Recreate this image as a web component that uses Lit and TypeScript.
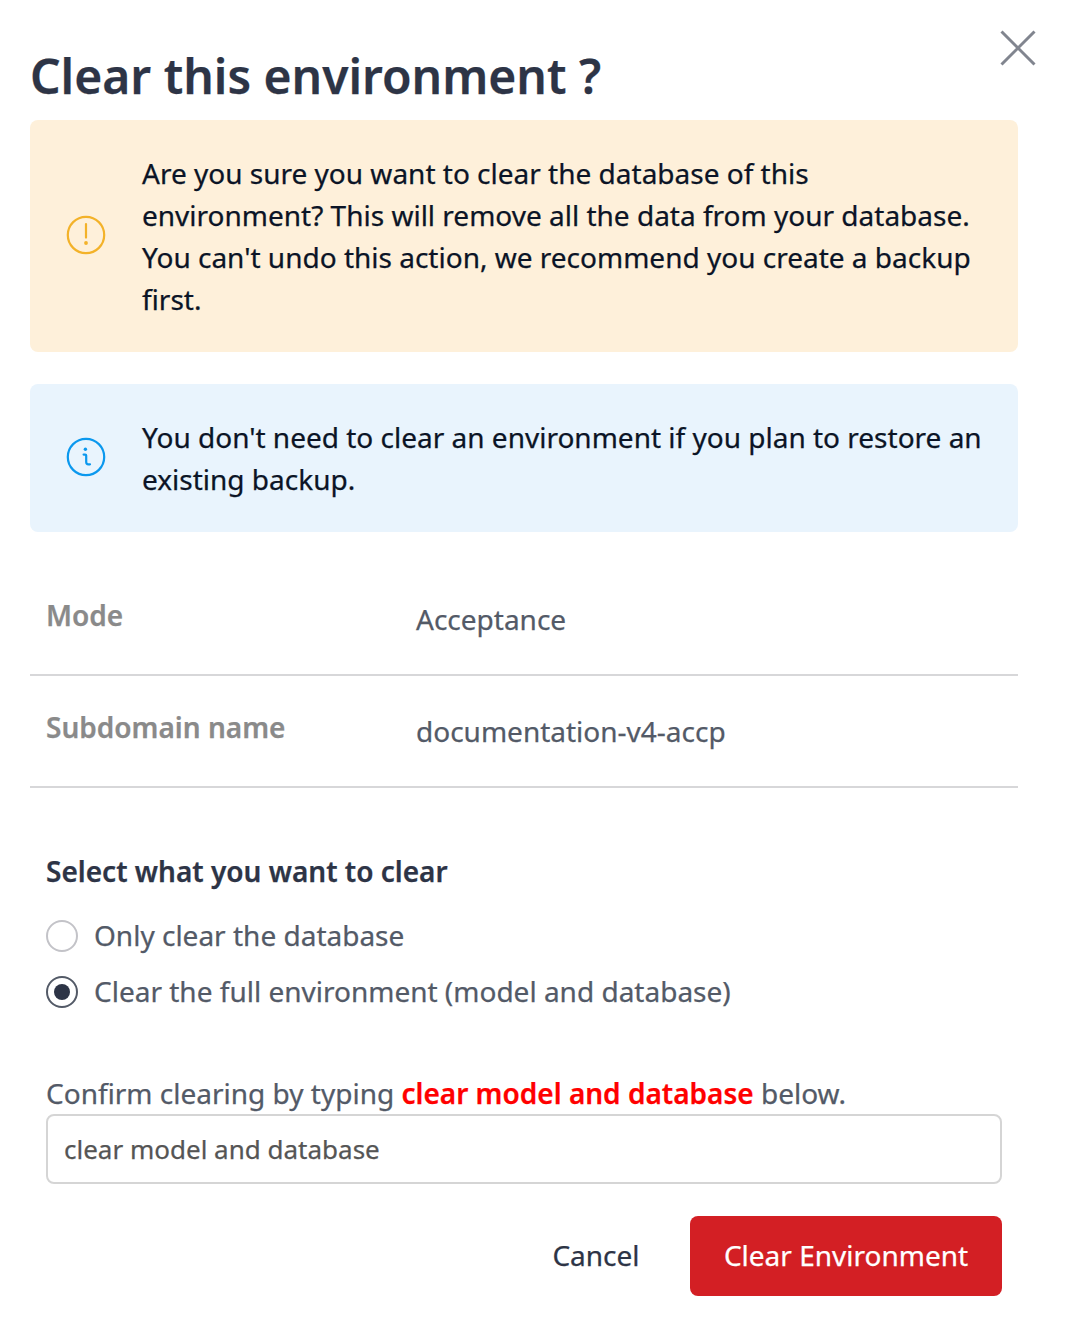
import { LitElement, html, css } from "lit";
import { customElement, state } from "lit/decorators.js";

@customElement("app-root")
export class AppRoot extends LitElement {
  @state() private mode = "full";

  static styles = css`
    * { box-sizing: border-box; }
    :host {
      display: block;
      height: 1326px;
      background: #fff;
      font-family: "Noto Sans", sans-serif;
      font-size: 28px;
      line-height: 42px;
      color: #535a67;
      -webkit-text-stroke: 0.25px currentColor;
      overflow: hidden;
    }
    .dialog { display: flex; flex-direction: column; padding: 30px 48px 0 30px; }
    .header { display: flex; justify-content: space-between; height: 90px; }
    h1 { margin: 12px 0 0; font-size: 48px; line-height: 68px; font-weight: 600; color: #2d3446; white-space: nowrap; }
    .close { width: 36px; height: 36px; margin-right: -18px; padding: 0; border: 0; background: none; }
    svg { display: block; }
    .notice { display: flex; align-items: center; border-radius: 8px; padding: 32px 32px 32px 36px; color: #0b1426; }
    .notice svg { flex: none; margin: 0 36px 1.4px 0; }
    .notice p { margin: 0; white-space: nowrap; }
    .warning { background: #fef0da; height: 232px; }
    .info { background: #e9f4fd; height: 148px; margin-top: 32px; }
    .facts { margin: 32px 0 0; }
    .fact { display: grid; grid-template-columns: 370px 1fr; height: 112px; padding: 30px 16px 0; border-bottom: 2px solid #d7d7d9; }
    dt { font-weight: 600; color: #8a8a8a; }
    dd { margin: 4px 0 0; }
    .body { padding: 62px 16px 0; display: flex; flex-direction: column; }
    h2 { margin: 0; font-size: 28px; line-height: 42px; font-weight: 600; color: #2d3446; }
    .options { padding-top: 16px; }
    .option { display: flex; align-items: center; height: 56px; gap: 16px; }
    .label { padding-bottom: 2px; }
    .radio { width: 32px; height: 32px; border-radius: 50%; border: 2px solid #c3c3c8; display: grid; place-items: center; }
    .radio.on { border-color: #535a67; }
    .radio.on::after { content: ""; width: 16px; height: 16px; border-radius: 50%; background: #2d3446; }
    .confirm { margin: 52px 0 0; white-space: nowrap; }
    .confirm strong { color: #ff0000; font-weight: 600; }
    input { height: 70px; width: 100%; border: 2px solid #d5d5d5; border-radius: 8px; padding: 0 16px; font: 26px "Noto Sans", sans-serif; color: #555; outline: none; -webkit-text-stroke: inherit; }
    .actions { display: flex; justify-content: flex-end; margin-top: 32px; }
    .actions button { height: 80px; border: 0; border-radius: 8px; font: 28px "Noto Sans", sans-serif; padding: 0 0 2px; -webkit-text-stroke: 0.25px currentColor; }
    .cancel { width: 188px; background: none; color: #2d3446; }
    .danger { width: 312px; background: #d31f24; color: #fff; }
  `;

  render() {
    return html`
      <section class="dialog">
        <header class="header">
          <h1>Clear this environment ?</h1>
          <button class="close" aria-label="Close">
            <svg width="36" height="36" viewBox="0 0 36 36" fill="none" stroke="#81858f" stroke-width="3"><path d="M1.5 1.5 34.5 34.5M34.5 1.5 1.5 34.5" /></svg>
          </button>
        </header>
        <div class="notice warning">
          <svg width="40" height="40" viewBox="0 0 40 40" fill="none" stroke="#f3b229" stroke-width="2.2" stroke-linecap="round"><circle cx="20" cy="20" r="18.2" /><path d="M20 9v13.6" /><circle cx="20" cy="28" r="1.9" fill="#f3b229" stroke="none" /></svg>
          <p>Are you sure you want to clear the database of this<br />environment? This will remove all the data from your database.<br />You can't undo this action, we recommend you create a backup<br />first.</p>
        </div>
        <div class="notice info">
          <svg width="40" height="40" viewBox="0 0 40 40" fill="none" stroke="#0b98ee" stroke-width="2.2" stroke-linecap="round" stroke-linejoin="round"><circle cx="20" cy="20" r="18.2" /><path d="M17.6 17.6H19.2Q20.2 17.6 20.2 18.6V25Q20.2 27.3 22.4 27.3H24" /><circle cx="19.4" cy="12.3" r="1.7" fill="#0b98ee" stroke="none" /></svg>
          <p>You don't need to clear an environment if you plan to restore an<br />existing backup.</p>
        </div>
        <dl class="facts">
          <div class="fact"><dt>Mode</dt><dd>Acceptance</dd></div>
          <div class="fact"><dt>Subdomain name</dt><dd>documentation-v4-accp</dd></div>
        </dl>
        <div class="body">
          <h2>Select what you want to clear</h2>
          <div class="options">
            <div class="option" @click=${() => (this.mode = "db")}><span class="radio ${this.mode === "db" ? "on" : ""}"></span><span class="label">Only clear the database</span></div>
            <div class="option" @click=${() => (this.mode = "full")}><span class="radio ${this.mode === "full" ? "on" : ""}"></span><span class="label">Clear the full environment (model and database)</span></div>
          </div>
          <p class="confirm">Confirm clearing by typing <strong>clear model and database</strong> below.</p>
          <input .value=${"clear model and database"} />
          <div class="actions"><button class="cancel">Cancel</button><button class="danger">Clear Environment</button></div>
        </div>
      </section>
    `;
  }
}
